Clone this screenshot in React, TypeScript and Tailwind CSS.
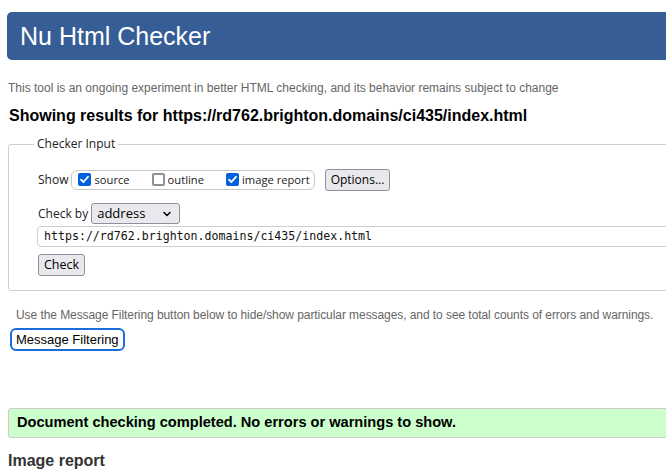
import { ChevronDown } from 'lucide-react';

// Small checkbox drawn by hand so it looks like the browser one in the shot
function Tick({ checked }: { checked: boolean }) {
  if (!checked) {
    return <span className="inline-block shrink-0 w-[13px] h-[13px] rounded-[2px] border-2 border-[#8f8f9d] bg-white" />;
  }
  return (
    <span className="inline-flex shrink-0 w-[13px] h-[13px] rounded-[2px] bg-[#0060df] items-center justify-center">
      <svg width="11" height="11" viewBox="0 0 11 11" fill="none">
        <path d="M2 5.6 L4.4 8 L9 2.8" stroke="white" strokeWidth="1.8" strokeLinecap="round" strokeLinejoin="round" />
      </svg>
    </span>
  );
}

const options = [
  { label: 'source', checked: true },
  { label: 'outline', checked: false },
  { label: 'image report', checked: true },
];

export default function App() {
  return (
    <div className="w-[666px] h-[474px] overflow-hidden bg-white font-['Liberation_Sans',Arial,sans-serif] text-black">
      <div className="w-[760px] pl-[7px] pt-[12px]">
        <header className="h-[48px] bg-[#365d95] rounded-l-[5px] pl-[13px] flex items-center">
          <h1 className="text-[25px] text-white leading-none">Nu Html Checker</h1>
        </header>

        <p className="mt-[21px] pl-[1px] text-[12px] leading-[14px] text-[#666]">
          This tool is an ongoing experiment in better HTML checking, and its behavior remains subject to change
        </p>

        <h2 className="mt-[11px] pl-[2px] text-[16px] leading-[20px] font-bold">
          Showing results for https://rd762.brighton.domains/ci435/index.html
        </h2>

        <fieldset className="mt-[11px] ml-[1px] border border-[#cfcfcf] rounded-[3px] pl-[29px] pt-[18px] pb-[14px] font-['Open_Sans','Noto_Sans',sans-serif] text-[11.2px] text-[#222]">
          <legend className="-ml-[4px] px-[3px] text-[12px] leading-[14px]">Checker Input</legend>

          <div className="flex items-center h-[22px] whitespace-nowrap">
            <span className="text-[12px]">Show</span>
            <div className="ml-[3px] h-[20px] border border-[#c8c8c8] rounded-[6px] flex items-center gap-[22px] pl-[6px] pr-[4px]">
              {options.map((o) => (
                <label key={o.label} className="flex items-center">
                  <Tick checked={o.checked} />
                  <span className="ml-[3px]">{o.label}</span>
                </label>
              ))}
            </div>
            <button
              type="button"
              className="ml-[10px] h-[22px] px-[5px] bg-[#e9e9ed] border border-[#8f8f9d] rounded-[3px] text-[12px] text-black"
            >
              Options...
            </button>
          </div>

          <div className="mt-[12px] flex items-center h-[21px]">
            <span className="text-[12px]">Check by</span>
            <div className="ml-[3px] h-[21px] w-[89px] bg-[#e9e9ed] border border-[#8f8f9d] rounded-[3px] flex items-center justify-between pl-[5px] pr-[6px] text-[13px] text-black">
              <span>address</span>
              <ChevronDown size={12} strokeWidth={3} />
            </div>
          </div>

          <div className="mt-[2px] -ml-[1px] h-[21px] border border-[#cfcfcf] rounded-l-[4px] flex items-center pl-[6px] font-['DejaVu_Sans_Mono',monospace] text-[11.6px] text-[#111]">
            https://rd762.brighton.domains/ci435/index.html
          </div>

          <button
            type="button"
            className="mt-[7px] h-[22px] px-[5px] bg-[#e9e9ed] border border-[#8f8f9d] rounded-[3px] text-[12.5px] text-black"
          >
            Check
          </button>
        </fieldset>

        <p className="mt-[17px] pl-[9px] text-[12px] leading-[14px] text-[#666] tracking-[-0.07px]">
          Use the Message Filtering button below to hide/show particular messages, and to see total counts of errors and warnings.
        </p>

        <button
          type="button"
          className="mt-[6px] ml-[3px] h-[23px] px-[4px] border-2 border-[#1a6ddb] rounded-[6px] bg-white text-[13px] text-black"
        >
          Message Filtering
        </button>

        <div className="mt-[57px] ml-[1px] h-[30px] bg-[#ccffcc] border border-[#cccccc] rounded-l-[3px] flex items-center pl-[8px]">
          <span className="text-[14.6px] font-bold">Document checking completed. No errors or warnings to show.</span>
        </div>

        <h2 className="mt-[13px] pl-[1px] text-[16px] leading-[20px] font-bold text-[#333]">Image report</h2>
      </div>
    </div>
  );
}
